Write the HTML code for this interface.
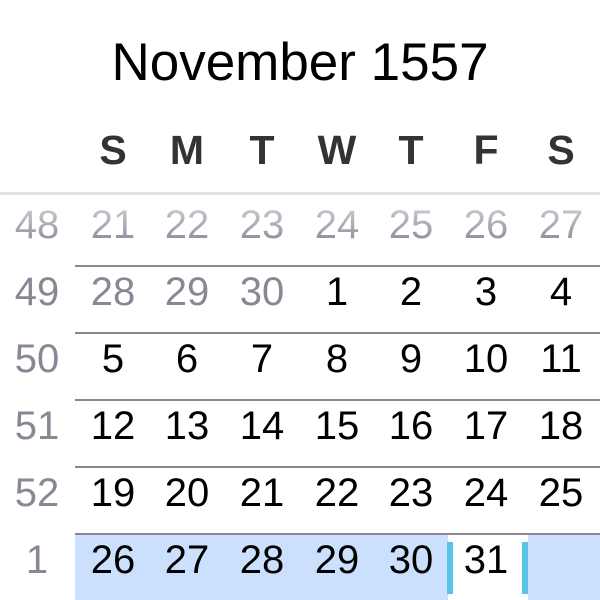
<!DOCTYPE html>
<html><head><style>
body{margin:0;width:600px;height:600px;background:#fff;position:relative;overflow:hidden;font-family:"Liberation Sans",Arial,sans-serif}
.t{position:absolute;white-space:nowrap;transform:translateX(-50%);line-height:1}
.title{font-size:53px;color:#000;left:300px;top:36px}
.d{font-size:41px;font-weight:bold;color:#333;top:130px}
.n{font-size:40px}
.g{color:#8a8794}
.k{color:#000}
.f{background:linear-gradient(#cfced6,#8a8794);-webkit-background-clip:text;background-clip:text;color:transparent}
.line{position:absolute;left:75px;right:0;height:2px;background:#8a8794}
</style></head><body>
<div class="t title">November 1557</div>
<div style="position:absolute;left:0;right:0;top:192px;height:3px;background:#e2e2e2"></div>
<div style="position:absolute;left:75px;top:535px;width:373px;height:65px;background:#cbe0fc"></div>
<div style="position:absolute;left:447px;top:542px;width:6px;height:52px;background:#5bc2e8"></div>
<div style="position:absolute;left:522px;top:542px;width:6px;height:52px;background:#5bc2e8"></div>
<div style="position:absolute;left:528px;top:535px;width:72px;height:65px;background:#cbe0fc"></div>
<div class="line" style="top:265px"></div>
<div class="line" style="top:332px"></div>
<div class="line" style="top:399px"></div>
<div class="line" style="top:466px"></div>
<div class="line" style="top:533px"></div>
<div id="c"></div>
<script>
var cols=[113,187,262,337,411,486,561],days=["S","M","T","W","T","F","S"],h="";
days.forEach(function(d,i){h+='<div class="t d" style="left:'+cols[i]+'px">'+d+'</div>';});
var rows=[[48,[21,22,23,24,25,26,27]],[49,[28,29,30,1,2,3,4]],[50,[5,6,7,8,9,10,11]],[51,[12,13,14,15,16,17,18]],[52,[19,20,21,22,23,24,25]],[1,[26,27,28,29,30,31,""]]];
rows.forEach(function(r,ri){var top=205+67*ri;
h+='<div class="t n '+(ri==0?'f':'g')+'" style="left:37px;top:'+top+'px">'+r[0]+'</div>';
r[1].forEach(function(v,i){var cls=ri==0?'f':(ri==1&&i<3?'g':'k');
h+='<div class="t n '+cls+'" style="left:'+cols[i]+'px;top:'+top+'px">'+v+'</div>';});});
document.getElementById('c').innerHTML=h;
</script>
</body></html>
